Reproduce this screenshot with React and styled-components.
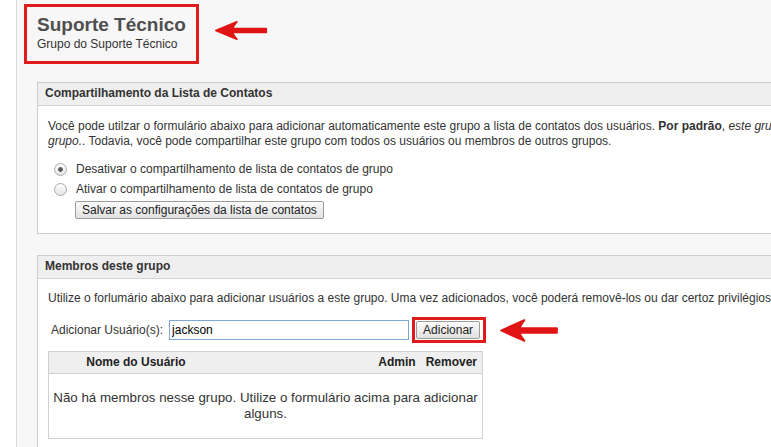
import styled, { createGlobalStyle } from 'styled-components';

const GlobalStyle = createGlobalStyle`
  html, body {
    margin: 0;
    padding: 0;
    overflow: hidden;
    background: #fff;
  }

  body {
    font-family: 'Liberation Sans', Arial, sans-serif;
    font-size: 12px;
    color: #333;
  }
`;

const RedArrow = ({ width, height }) => (
  <ArrowSvg width={width} height={height} viewBox='0 0 60 24' preserveAspectRatio='none'>
    <path
      d='M2 12 L25 2 Q20.5 8 20.5 9.8 L57 9.8 L57 14.2 L20.5 14.2 Q20.5 16 25 22 Z'
      fill='#e01414'
      stroke='#e01414'
      strokeWidth='1.8'
      strokeLinejoin='round'
    />
  </ArrowSvg>
);

const App = () => (
  <Page>
    <GlobalStyle />
    <SideEdge />
    <Main>
      <TitleRow>
        <TitleBox>
          <h1>Suporte Técnico</h1>
          <p>Grupo do Suporte Técnico</p>
        </TitleBox>
        <ArrowSlot $top={16} $left={15}>
          <RedArrow width={55} height={21} />
        </ArrowSlot>
      </TitleRow>

      <Panel $gap={18}>
        <PanelHeader>Compartilhamento da Lista de Contatos</PanelHeader>
        <PanelBody>
          <Text>
            Você pode utilzar o formulário abaixo para adicionar automaticamente este grupo a lista de contatos dos
            usuários. <b>Por padrão</b>, <i>este grupo não é compartilhado com nenhum</i>
            <br />
            <i>grupo.</i>. Todavia, você pode compartilhar este grupo com todos os usuários ou membros de outros grupos.
          </Text>
          <RadioList>
            <RadioRow>
              <Radio type='radio' name='share' defaultChecked />
              Desativar o compartilhamento de lista de contatos de grupo
            </RadioRow>
            <RadioRow>
              <Radio type='radio' name='share' />
              Ativar o compartilhamento de lista de contatos de grupo
            </RadioRow>
          </RadioList>
          <SaveRow>
            <Button type='button'>Salvar as configurações da lista de contatos</Button>
          </SaveRow>
        </PanelBody>
      </Panel>

      <Panel $gap={21}>
        <PanelHeader>Membros deste grupo</PanelHeader>
        <PanelBody $top={12}>
          <Text>
            Utilize o forlumário abaixo para adicionar usuários a este grupo. Uma vez adicionados, você poderá
            removê-los ou dar certoz privilégios a eles.
          </Text>
          <AddRow>
            <label htmlFor='add-user'>Adicionar Usuário(s):</label>
            <UserInput id='add-user' defaultValue='jackson' autoFocus />
            <Highlight>
              <Button type='button'>Adicionar</Button>
            </Highlight>
            <ArrowSlot $left={13}>
              <RedArrow width={61} height={25} />
            </ArrowSlot>
          </AddRow>
          <MembersTable>
            <TableHead>
              <NameCol>Nome do Usuário</NameCol>
              <Spacer />
              <HeadCell>Admin</HeadCell>
              <HeadCell>Remover</HeadCell>
            </TableHead>
            <EmptyCell>Não há membros nesse grupo. Utilize o formulário acima para adicionar alguns.</EmptyCell>
          </MembersTable>
        </PanelBody>
      </Panel>
    </Main>
  </Page>
);

const Page = styled.div`
  display: flex;
  min-height: 100vh;
`;

const SideEdge = styled.div`
  width: 16px;
  flex-shrink: 0;
  background: #fff;
  border-right: 1px solid #dadada;
`;

const Main = styled.main`
  flex: 1;
  min-width: 0;
  background: #f7f7f7;
  padding: 4px 0 0 7px;
  overflow: hidden;
`;

const TitleRow = styled.div`
  display: flex;
  align-items: flex-start;
`;

const TitleBox = styled.div`
  border: 3px solid #e01b1b;
  padding: 7px 10px 10px 10px;

  h1 {
    margin: 0;
    font-size: 19px;
    line-height: 22px;
    font-weight: 700;
    color: #4f4f4f;
  }

  p {
    margin: 1px 0 0;
    font-size: 12px;
    line-height: 14px;
    color: #333;
  }
`;

const ArrowSlot = styled.div`
  display: flex;
  margin-top: ${(p) => p.$top || 0}px;
  margin-left: ${(p) => p.$left || 17}px;
`;

const ArrowSvg = styled.svg`
  display: block;
`;

const Panel = styled.section`
  width: 1000px;
  margin: ${(p) => p.$gap}px 0 0 13px;
  border: 1px solid #cdcdcd;
  background: #fff;
`;

const PanelHeader = styled.h2`
  margin: 0;
  height: 22px;
  line-height: 21px;
  padding: 0 7px;
  font-size: 12px;
  font-weight: 700;
  color: #333;
  background: #efefef;
  border-bottom: 1px solid #d2d2d2;
`;

const PanelBody = styled.div`
  padding: ${(p) => p.$top || 13}px 10px 14px;
`;

const Text = styled.p`
  margin: 0;
  line-height: 15px;
  white-space: nowrap;
`;

const RadioList = styled.div`
  margin-top: 10px;
  padding-left: 6px;
`;

const RadioRow = styled.label`
  display: flex;
  align-items: center;
  gap: 9px;
  height: 20px;
`;

const Radio = styled.input`
  appearance: none;
  margin: 0;
  width: 13px;
  height: 13px;
  border-radius: 50%;
  border: 1px solid #acacac;
  background: linear-gradient(#fdfdfd, #e4e4e4);
  box-sizing: border-box;

  &:checked {
    background: radial-gradient(circle, #5a5a5a 0 2px, transparent 2.6px), linear-gradient(#fdfdfd, #e4e4e4);
  }
`;

const SaveRow = styled.div`
  margin: 2px 0 0 27px;
`;

const Button = styled.button`
  height: 18px;
  padding: 0 6px;
  font-family: 'Liberation Sans', Arial, sans-serif;
  font-size: 12px;
  color: #222;
  background: linear-gradient(#fbfbfb, #e1e1e1);
  border: 1px solid #9c9c9c;
  border-radius: 2px;
  cursor: pointer;
`;

const AddRow = styled.div`
  display: flex;
  align-items: center;
  margin-top: 11px;
  padding-left: 3px;

  label {
    margin-right: 6px;
  }
`;

const UserInput = styled.input`
  width: 240px;
  height: 20px;
  box-sizing: border-box;
  padding: 0 2px;
  font-family: 'Liberation Sans', Arial, sans-serif;
  font-size: 12px;
  color: #000;
  border: 1px solid #7ea6d6;
  outline: none;
  background: #fff;
`;

const Highlight = styled.div`
  display: flex;
  margin-left: 3px;
  padding: 1px 3px 1px 1px;
  border: 3px solid #e01b1b;
`;

const MembersTable = styled.div`
  width: 435px;
  margin-top: 8px;
  border: 1px solid #d0d0d0;
  box-sizing: border-box;
`;

const TableHead = styled.div`
  display: flex;
  height: 21px;
  line-height: 21px;
  background: #efefef;
  border-bottom: 1px solid #d0d0d0;
  font-weight: 700;
  color: #222;
`;

const NameCol = styled.div`
  width: 174px;
  text-align: center;
`;

const Spacer = styled.div`
  flex: 1;
`;

const HeadCell = styled.div`
  padding: 0 5px;
`;

const EmptyCell = styled.div`
  padding: 16px 4px 17px;
  text-align: center;
  font-size: 13.33px;
  line-height: 15.5px;
  color: #333;
`;

export default App;
